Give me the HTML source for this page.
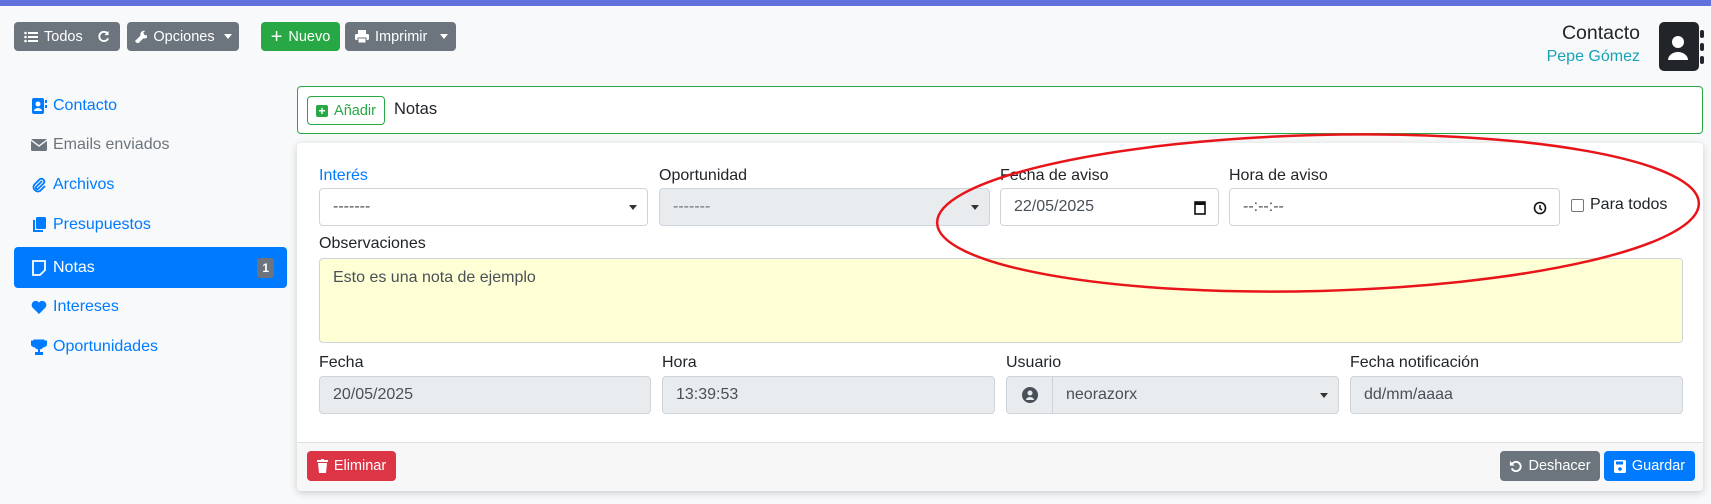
<!DOCTYPE html>
<html><head><meta charset="utf-8"><style>
*{box-sizing:border-box}
body{margin:0;width:1711px;height:504px;background:#f8f9fa;font-family:"Liberation Sans",sans-serif;font-size:16px;color:#212529;position:relative;overflow:hidden}
.a{position:absolute}
.btn{position:absolute;border-radius:4px;color:#fff;font-size:14.5px;display:flex;align-items:center;justify-content:center;gap:6px}
.gray{background:#6c757d}
.lbl{position:absolute;font-size:16px}
.inp{position:absolute;border:1px solid #ced4da;border-radius:4px;background:#fff;height:38px;display:flex;align-items:center;padding-left:13px;font-size:16px;color:#495057}
.dis{background:#e9ecef}
.side{position:absolute;left:14px;width:273px;height:40px;display:flex;align-items:center;padding-left:17px;color:#007bff;font-size:16px;gap:6px}
.side svg{width:16px;height:16px}
.caret{position:absolute;right:10px;top:16px;width:0;height:0;border-left:4px solid transparent;border-right:4px solid transparent;border-top:5px solid #333}
</style></head><body>
<div class="a" style="left:0;top:0;width:1711px;height:6px;background:#6172de"></div>

<div class="btn gray" style="left:14px;top:22px;width:106px;height:29px;justify-content:flex-start;padding-left:10px">
<svg width="14" height="12" viewBox="0 0 14 12"><g fill="#fff"><circle cx="1.5" cy="2" r="1.3"/><circle cx="1.5" cy="6" r="1.3"/><circle cx="1.5" cy="10" r="1.3"/><rect x="4" y="1" width="10" height="2"/><rect x="4" y="5" width="10" height="2"/><rect x="4" y="9" width="10" height="2"/></g></svg>Todos
<svg style="position:absolute;right:10px" width="13" height="13" viewBox="0 0 14 14"><path d="M11.5 4A5 5 0 1 0 12 9" stroke="#fff" stroke-width="2" fill="none"/><path d="M12.5 1v4.5H8z" fill="#fff"/></svg></div>
<div class="btn gray" style="left:127px;top:22px;width:112px;height:29px">
<svg width="13" height="13" viewBox="0 0 14 14"><path d="M1 12l6-6a4 4 0 0 1 5-5l-2 2 1 2 2 1 2-2a4 4 0 0 1-5 5l-6 6z" fill="#fff"/></svg>Opciones <span style="border-left:4px solid transparent;border-right:4px solid transparent;border-top:5px solid #fff;margin-left:3px"></span></div>
<div class="btn" style="left:261px;top:22px;width:79px;height:29px;background:#28a745"><span style="font-size:20px;line-height:1">+</span>Nuevo</div>
<div class="btn gray" style="left:345px;top:22px;width:111px;height:29px;justify-content:flex-start;padding-left:10px">
<svg width="14" height="13" viewBox="0 0 14 13"><rect x="3" y="0" width="8" height="4" fill="#fff"/><rect x="0" y="4" width="14" height="6" rx="1.5" fill="#fff"/><rect x="3" y="8" width="8" height="5" fill="#fff" stroke="#6c757d"/></svg>Imprimir
<span style="position:absolute;right:8px;border-left:4px solid transparent;border-right:4px solid transparent;border-top:5px solid #fff"></span></div>

<div class="a" style="right:71px;top:22px;font-size:19.5px;text-align:right">Contacto</div>
<div class="a" style="right:71px;top:48px;font-size:16px;color:#17a2b8">Pepe Gómez</div>
<div class="a" style="left:1659px;top:22px;width:40px;height:49px;background:#212529;border-radius:5px"></div>
<svg class="a" style="left:1666px;top:32px" width="24" height="30" viewBox="0 0 24 30"><circle cx="12" cy="10" r="6" fill="#fff"/><path d="M2 28a10 8 0 0 1 20 0z" fill="#fff"/></svg>
<div class="a" style="left:1700px;top:30px;width:4px;height:8px;background:#212529;border-radius:2px"></div>
<div class="a" style="left:1700px;top:43px;width:4px;height:8px;background:#212529;border-radius:2px"></div>
<div class="a" style="left:1700px;top:56px;width:4px;height:8px;background:#212529;border-radius:2px"></div>

<div class="side" style="top:86px"><svg viewBox="0 0 16 16"><rect x="1" y="0" width="12" height="16" rx="2" fill="#007bff"/><circle cx="7" cy="6" r="2.5" fill="#fff"/><path d="M3 13a4 3 0 0 1 8 0z" fill="#fff"/><rect x="14" y="2" width="2" height="3" fill="#007bff"/><rect x="14" y="7" width="2" height="3" fill="#007bff"/></svg>Contacto</div>
<div class="side" style="top:125px;color:#6c757d"><svg viewBox="0 0 16 16"><rect x="0" y="2" width="16" height="12" rx="1.5" fill="#6c757d"/><path d="M0 3l8 6 8-6" stroke="#f8f9fa" stroke-width="1.4" fill="none"/></svg>Emails enviados</div>
<div class="side" style="top:165px"><svg viewBox="0 0 16 16"><path d="M11 4L5 10a1.5 1.5 0 0 0 2 2l6-6a3 3 0 0 0-4-4L3 8a4.5 4.5 0 0 0 6 6l5-5" stroke="#007bff" stroke-width="1.8" fill="none"/></svg>Archivos</div>
<div class="side" style="top:205px"><svg viewBox="0 0 16 16"><rect x="5" y="0" width="10" height="12" rx="1.5" fill="#007bff"/><path d="M3 3v11h9" stroke="#007bff" stroke-width="2" fill="none"/></svg>Presupuestos</div>
<div class="side" style="top:247px;height:41px;background:#007bff;color:#fff;border-radius:4px"><svg viewBox="0 0 16 16"><path d="M2 1h12v9l-5 5H2z" stroke="#fff" stroke-width="1.8" fill="none"/></svg>Notas
<span style="position:absolute;right:13px;top:11px;background:#6c757d;color:#fff;font-size:12px;font-weight:bold;border-radius:3px;padding:3px 5px">1</span></div>
<div class="side" style="top:287px"><svg viewBox="0 0 16 16"><path d="M8 15L1.5 8.5a4 4 0 0 1 6.5-5 4 4 0 0 1 6.5 5z" fill="#007bff"/></svg>Intereses</div>
<div class="side" style="top:327px"><svg viewBox="0 0 16 16"><path d="M3 1h10v4a5 5 0 0 1-10 0z M3 2H0v2a4 4 0 0 0 4 4 M13 2h3v2a4 4 0 0 1-4 4" fill="#007bff" stroke="#007bff" stroke-width="1"/><rect x="7" y="9" width="2" height="4" fill="#007bff"/><rect x="4" y="13" width="8" height="3" fill="#007bff"/></svg>Oportunidades</div>

<div class="a" style="left:297px;top:86px;width:1406px;height:48px;background:#fff;border:1px solid #28a745;border-radius:4px"></div>
<div class="a" style="left:307px;top:96px;width:78px;height:29px;border:1px solid #28a745;border-radius:4px;color:#28a745;font-size:14.5px;display:flex;align-items:center;justify-content:center;gap:6px"><span style="width:12px;height:12px;background:#28a745;border-radius:2px;color:#fff;font-size:12px;line-height:12px;text-align:center;font-weight:bold">+</span>Añadir</div>
<div class="a" style="left:394px;top:100px;font-size:16.5px">Notas</div>

<div class="a" style="left:297px;top:143px;width:1406px;height:348px;background:#fff;border-radius:4px;box-shadow:0 2px 8px rgba(0,0,0,.18)"></div>
<div class="a" style="left:297px;top:442px;width:1406px;height:49px;background:#f7f7f7;border-top:1px solid #dfdfdf;border-radius:0 0 4px 4px"></div>

<div class="lbl" style="left:319px;top:167px;color:#007bff">Interés</div>
<div class="lbl" style="left:659px;top:167px">Oportunidad</div>
<div class="lbl" style="left:1000px;top:167px">Fecha de aviso</div>
<div class="lbl" style="left:1229px;top:167px">Hora de aviso</div>
<div class="inp" style="left:319px;top:188px;width:329px">-------<div class="caret"></div></div>
<div class="inp dis" style="left:659px;top:188px;width:331px;color:#6c757d">-------<div class="caret"></div></div>
<div class="inp" style="left:1000px;top:188px;width:219px">22/05/2025
<svg class="a" style="right:12px;top:11px" width="12" height="15" viewBox="0 0 12 15"><rect x="1" y="2" width="10" height="12" stroke="#111" stroke-width="1.6" fill="none"/><rect x="1" y="2" width="10" height="3" fill="#111"/></svg></div>
<div class="inp" style="left:1229px;top:188px;width:331px">--:--:--
<svg class="a" style="right:12px;top:12px" width="14" height="14" viewBox="0 0 14 14"><circle cx="7" cy="7" r="5.5" stroke="#111" stroke-width="1.6" fill="none"/><path d="M7 4v3.5l2 1.5" stroke="#111" stroke-width="1.5" fill="none"/></svg></div>
<div class="a" style="left:1571px;top:199px;width:13px;height:13px;border:1px solid #767676;border-radius:2px;background:#fff"></div>
<div class="lbl" style="left:1590px;top:196px">Para todos</div>

<div class="lbl" style="left:319px;top:235px">Observaciones</div>
<div class="a" style="left:319px;top:258px;width:1364px;height:85px;background:#ffffd6;border:1px solid #ced4da;border-radius:4px;padding:10px 13px;color:#495057">Esto es una nota de ejemplo</div>

<div class="lbl" style="left:319px;top:354px">Fecha</div>
<div class="lbl" style="left:662px;top:354px">Hora</div>
<div class="lbl" style="left:1006px;top:354px">Usuario</div>
<div class="lbl" style="left:1350px;top:354px">Fecha notificación</div>
<div class="inp dis" style="left:319px;top:376px;width:332px">20/05/2025</div>
<div class="inp dis" style="left:662px;top:376px;width:333px">13:39:53</div>
<div class="inp dis" style="left:1006px;top:376px;width:333px;padding-left:0">
<div style="width:46px;height:36px;border-right:1px solid #ced4da;display:flex;align-items:center;justify-content:center"><svg width="16" height="16" viewBox="0 0 16 16"><circle cx="8" cy="8" r="8" fill="#495057"/><circle cx="8" cy="6" r="2.5" fill="#e9ecef"/><path d="M4 13a4 3 0 0 1 8 0" fill="#e9ecef"/></svg></div>
<span style="padding-left:13px">neorazorx</span><div class="caret"></div></div>
<div class="inp dis" style="left:1350px;top:376px;width:333px">dd/mm/aaaa</div>

<div class="btn" style="left:307px;top:451px;width:89px;height:30px;background:#dc3545"><svg width="11" height="14" viewBox="0 0 11 14"><rect x="0" y="1" width="11" height="2" fill="#fff"/><rect x="4" y="0" width="3" height="2" fill="#fff"/><path d="M1 4h9l-1 10H2z" fill="#fff"/></svg>Eliminar</div>
<div class="btn gray" style="left:1500px;top:451px;width:100px;height:30px"><svg width="13" height="13" viewBox="0 0 14 14"><path d="M3 5a5 5 0 1 1 0 4" stroke="#fff" stroke-width="2" fill="none"/><path d="M1 1v5h5z" fill="#fff"/></svg>Deshacer</div>
<div class="btn" style="left:1604px;top:451px;width:91px;height:30px;background:#007bff"><svg width="12" height="13" viewBox="0 0 12 13"><rect x="0" y="0" width="12" height="13" rx="1.5" fill="#fff"/><rect x="2" y="1.5" width="7" height="3" fill="#007bff"/><circle cx="6" cy="9" r="1.8" fill="#007bff"/></svg>Guardar</div>

<svg class="a" style="left:0;top:0" width="1711" height="504"><ellipse cx="1318" cy="213" rx="381" ry="78" transform="rotate(-1.5 1318 213)" fill="none" stroke="#e8141a" stroke-width="2.5"/></svg>
</body></html>
